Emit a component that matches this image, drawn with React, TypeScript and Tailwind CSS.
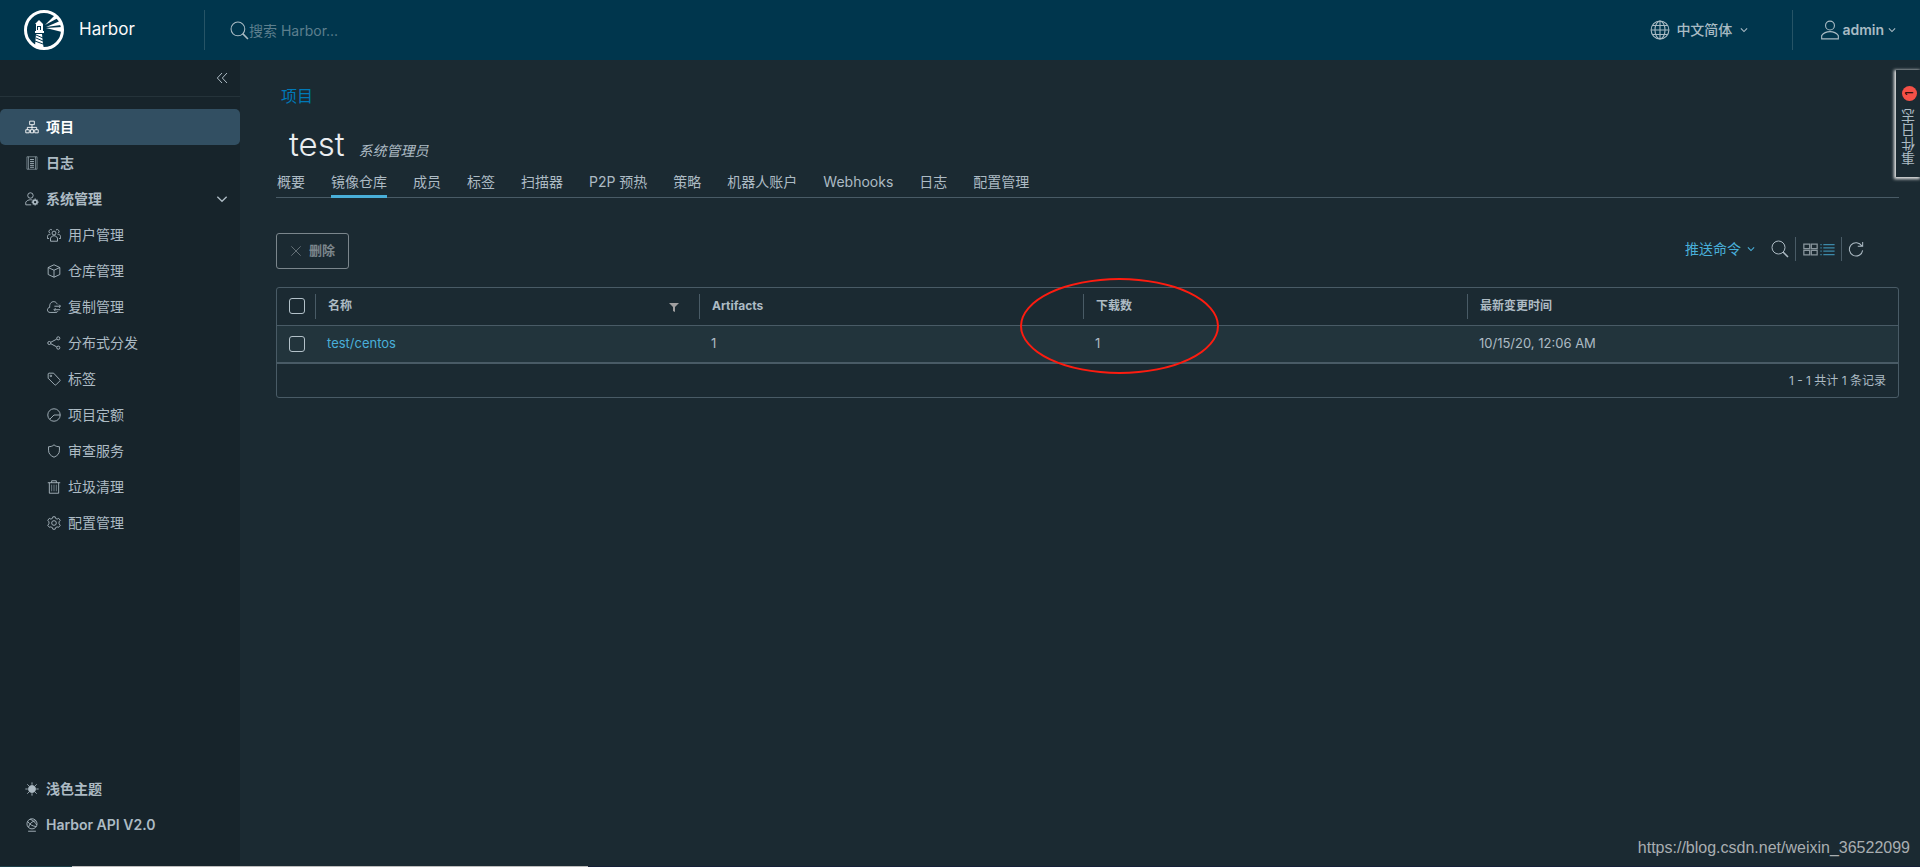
import React, { useState } from "react";

const paths: Record<string, React.ReactNode> = {
	organization: (
		<>
			<path d="M12 3h12v9H12zM2 25h9v8H2zM25 25h9v8h-9zM14 25h8v8h-8z" />
			<path d="M18 12v13M6 25v-6h24v6" />
		</>
	),
	list: (
		<>
			<path d="M5 2h26v32H5zM9 2v32M27 2v32" strokeWidth="1.5" />
			<path d="M13 9h10M13 14h10M13 19h10M13 24h10M13 29h10" />
		</>
	),
	admin: (
		<>
			<circle cx="14" cy="9" r="7" />
			<path d="M16 33H2v-7c3-4 7-6 12-6 2 0 3 0 5 1" />
			<circle cx="26" cy="26" r="5" strokeWidth="4" />
			<path
				d="M26 17v4M26 31v4M17 26h4M31 26h4M20 20l3 3M29 29l3 3M32 20l-3 3M20 32l3-3"
				strokeWidth="3"
			/>
		</>
	),
	users: (
		<>
			<circle cx="18" cy="13" r="5" />
			<path d="M9 34v-8c2-4 5-6 9-6s7 2 9 6v8z" />
			<path d="M13 5a5 5 0 1 0-6 8M23 5a5 5 0 1 1 6 8" />
			<path d="M9 16c-4 0-7 2-8 5v6h4M27 16c4 0 7 2 8 5v6h-4" />
		</>
	),
	cube: (
		<>
			<path d="M18 2l15 7v18l-15 7-15-7V9z" />
			<path d="M3 9l15 7 15-7M18 16v18" />
		</>
	),
	cloud: (
		<>
			<path d="M28 29c-1 2-3 3-5 3H8c-9 0-9-12-1-13C5 2 23 0 26 11" />
			<path d="M19 16h15M31 12l4 4-4 4M34 25H19M22 21l-4 4 4 4" />
		</>
	),
	share: (
		<>
			<circle cx="6" cy="18" r="4" />
			<circle cx="29" cy="6" r="4" />
			<circle cx="29" cy="30" r="4" />
			<path d="M10 16L25 8M10 20l15 8" />
		</>
	),
	tag: (
		<>
			<path d="M3 5v11l17 17c1 1 2 1 3 0l10-10c1-1 1-2 0-3L17 3H5c-1 0-2 1-2 2z" />
			<circle cx="10" cy="10" r="2" />
		</>
	),
	quota: (
		<>
			<circle cx="18" cy="18" r="16" />
			<path d="M34 18H18L7 29" />
		</>
	),
	shield: (
		<path d="M18 2c4 4 9 5 14 5v9c0 9-5 14-14 18C9 30 4 25 4 16V7c5 0 10-1 14-5z" />
	),
	trash: (
		<>
			<path d="M2 7h32M12 7V2h12v5M6 7v27h24V7" />
			<path d="M12 12v17M18 12v17M24 12v17" strokeWidth="1.5" />
		</>
	),
	cog: (
		<>
			<path d="M15 2h6l1 4 4 2 4-2 4 5-3 4v5l3 4-4 5-4-1-4 2-1 4h-6l-1-4-4-2-4 1-4-5 3-4v-5l-3-4 4-5 4 2 4-2z" />
			<circle cx="18" cy="18" r="6" />
		</>
	),
	sun: (
		<>
			<circle cx="18" cy="18" r="9" fill="currentColor" />
			<path d="M18 1v6M18 29v6M1 18h6M29 18h6M6 6l4 4M26 26l4 4M30 6l-4 4M6 30l4-4" />
		</>
	),
	api: (
		<>
			<circle cx="18" cy="15" r="13" />
			<path d="M7 9c5 8 12 12 22 13M28 7C18 8 12 14 9 24M13 3c8 3 14 9 17 15" />
			<path d="M8 34h20" />
		</>
	),
	search: (
		<>
			<circle cx="15" cy="15" r="13" />
			<path d="M24 24l10 10" strokeWidth="3" />
		</>
	),
	globe: (
		<>
			<circle cx="18" cy="18" r="16" />
			<path d="M18 2v32M2 18h32M5 10h26M5 26h26" />
			<ellipse cx="18" cy="18" rx="9" ry="16" />
		</>
	),
	user: (
		<>
			<circle cx="18" cy="10" r="8" />
			<path d="M3 34v-6c3-4 9-7 15-7s12 3 15 7v6z" />
		</>
	),
	chevron: <path d="M4 11l14 14 14-14" />,
	collapse: <path d="M18 3L4 18l14 15M33 3L19 18l14 15" />,
	close: <path d="M4 4l28 28M32 4L4 32" />,
	grid: <path d="M2 5h14v11H2zM20 5h14v11H20zM2 20h14v11H2zM20 20h14v11H20z" />,
	rows: (
		<path d="M8 6h27M8 14h27M8 22h27M8 30h27M1 6h3M1 14h3M1 22h3M1 30h3" />
	),
	refresh: <path d="M31 11A15 15 0 1 0 33 21M33 2v10H22" />,
};

const Icon = ({
	name,
	className = "size-3.5",
	stroke = 2.3,
}: {
	name: string;
	className?: string;
	stroke?: number;
}) => (
	<svg
		viewBox="0 0 36 36"
		fill="none"
		stroke="currentColor"
		strokeWidth={stroke}
		className={`shrink-0 ${className}`}
		aria-hidden="true"
	>
		{paths[name]}
	</svg>
);

const Logo = () => (
	<svg viewBox="0 0 40 40" className="size-10 shrink-0" aria-hidden="true">
		<circle cx="20" cy="20" r="18.5" fill="none" stroke="#fff" strokeWidth="3" />
		<path d="M11 14l4-4 4 4v7h1v2h-9v-2h1v-7z" fill="#fff" />
		<path d="M13 16h4v4h-4z" fill="#00364d" />
		<path d="M14 17h2v3h-2z" fill="#fff" />
		<path d="M12 24h6l1 10 1 5-9-3z" fill="#fff" />
		<path
			d="M12 25l7 3M12 28l7 3M11 31l8 3"
			stroke="#00364d"
			strokeWidth="1"
		/>
		<path d="M21 15L31 5l3 3zM22 17l14-6 1 4zM22 18l16-1v5z" fill="#fff" />
	</svg>
);

const systemItems = [
	{ label: "用户管理", icon: "users" },
	{ label: "仓库管理", icon: "cube" },
	{ label: "复制管理", icon: "cloud" },
	{ label: "分布式分发", icon: "share" },
	{ label: "标签", icon: "tag" },
	{ label: "项目定额", icon: "quota" },
	{ label: "审查服务", icon: "shield" },
	{ label: "垃圾清理", icon: "trash" },
	{ label: "配置管理", icon: "cog" },
];

const tabs = [
	"概要",
	"镜像仓库",
	"成员",
	"标签",
	"扫描器",
	"P2P 预热",
	"策略",
	"机器人账户",
	"Webhooks",
	"日志",
	"配置管理",
];

const repositories = [
	{
		name: "test/centos",
		artifacts: 1,
		pulls: 1,
		updated: "10/15/20, 12:06 AM",
	},
];

const Header = () => (
	<header className="h-15 shrink-0 bg-[#00364d] flex items-center text-[#a9bbc4]">
		<a href="#" className="flex items-center gap-[15px] pl-6 w-51 text-[17px] text-[#fafafa]">
			<Logo />
			Harbor
		</a>
		<label className="flex items-center flex-1 h-10 pl-[25px] border-l border-[#265466]">
			<Icon name="search" className="size-[19px]" stroke={2} />
			<input
				type="text"
				aria-label="搜索"
				placeholder="搜索 Harbor..."
				className="w-60 pt-0.5 bg-transparent outline-none text-sm placeholder:text-[#5d7f8e]"
			/>
		</label>
		<button className="flex items-center gap-1.5 pr-11 text-sm font-medium">
			<Icon name="globe" className="size-5" stroke={2} />
			中文简体
			<Icon name="chevron" className="size-2 ml-0.5" stroke={5} />
		</button>
		<button className="flex items-center h-10 pl-[27px] pr-6 border-l border-[#265466] text-sm font-semibold">
			<Icon name="user" className="size-5 mr-0.5" stroke={2} />
			admin
			<Icon name="chevron" className="size-2 ml-1" stroke={5} />
		</button>
	</header>
);

const Sidebar = () => (
	<aside className="w-60 shrink-0 flex flex-col bg-[#17242b] text-sm text-[#adbbc4]">
		<div className="h-[37px] shrink-0 border-b border-[#25333a] flex items-center justify-end pr-3">
			<button aria-label="收起">
				<Icon name="collapse" className="size-3" stroke={3} />
			</button>
		</div>
		<nav className="pt-3 flex-1">
			<a
				href="#"
				className="flex items-center gap-[7px] h-9 pl-[25px] rounded-[5px] bg-[#324f62] text-white font-bold"
			>
				<Icon name="organization" />
				项目
			</a>
			<a href="#" className="flex items-center gap-[7px] h-9 pl-[25px] font-semibold">
				<Icon name="list" />
				日志
			</a>
			<button className="flex items-center gap-[7px] h-9 w-full pl-[25px] pr-3 font-semibold">
				<Icon name="admin" />
				系统管理
				<Icon name="chevron" className="size-3 ml-auto" stroke={4} />
			</button>
			{systemItems.map((item) => (
				<a
					key={item.label}
					href="#"
					className="flex items-center gap-[7px] h-9 pl-[47px]"
				>
					<Icon name={item.icon} />
					{item.label}
				</a>
			))}
		</nav>
		<div className="pb-6 font-semibold">
			<button className="flex items-center gap-[7px] h-9 pl-[25px]">
				<Icon name="sun" />
				浅色主题
			</button>
			<a href="#" className="flex items-center gap-[7px] h-9 pl-[25px]">
				<Icon name="api" />
				Harbor API V2.0
			</a>
		</div>
	</aside>
);

const Checkbox = ({ label }: { label: string }) => (
	<input
		type="checkbox"
		aria-label={label}
		className="appearance-none block size-4 ml-3 rounded-[3px] border border-[#b3c1c9] checked:bg-[#49afd9]"
	/>
);

const HeaderCell = ({ children }: { children?: React.ReactNode }) => (
	<div className="flex items-center h-[25px] pl-3 pr-5 border-l border-[#495b66]">
		{children}
	</div>
);

const RepositoryTable = () => (
	<div className="border border-[#495b66] rounded-[3px]">
		<table className="w-full table-fixed text-left border-collapse">
			<thead className="text-xs font-semibold">
				<tr className="h-[37px] border-b border-[#495b66]">
					<th className="w-[38px]">
						<Checkbox label="全选" />
					</th>
					<th>
						<HeaderCell>
							名称
							<button aria-label="过滤" className="ml-auto">
								<svg viewBox="0 0 10 10" className="size-2.5 mt-0.5">
									<path d="M0 1h10L6 5v5L4 9V5z" fill="#a09fa0" />
								</svg>
							</button>
						</HeaderCell>
					</th>
					<th>
						<HeaderCell>Artifacts</HeaderCell>
					</th>
					<th className="relative">
						<HeaderCell>下载数</HeaderCell>
						<span className="absolute -left-[63px] -top-2.5 w-[199px] h-24 rounded-[50%] border-2 border-[#fd1c10] pointer-events-none" />
					</th>
					<th>
						<HeaderCell>最新变更时间</HeaderCell>
					</th>
					<td className="w-[47px]" />
				</tr>
			</thead>
			<tbody className="text-[13px]">
				{repositories.map((repo) => (
					<tr
						key={repo.name}
						className="h-[38px] bg-[#22343c] border-b-2 border-[#495b66]"
					>
						<td>
							<Checkbox label={repo.name} />
						</td>
						<td className="pl-3">
							<a href="#" className="text-[#49afd9]">
								{repo.name}
							</a>
						</td>
						<td className="pl-3">{repo.artifacts}</td>
						<td className="pl-3">{repo.pulls}</td>
						<td className="pl-3">{repo.updated}</td>
						<td />
					</tr>
				))}
			</tbody>
		</table>
		<div className="h-[33px] flex items-center justify-end pr-3 text-xs">
			1 - 1 共计 1 条记录
		</div>
	</div>
);

const App = () => {
	const [activeTab, setActiveTab] = useState("镜像仓库");

	return (
		<div className="relative min-h-screen flex flex-col bg-[#1b2a32] text-[#adbbc4] font-['Inter','Noto_Sans_CJK_SC',sans-serif]">
			<Header />
			<div className="flex flex-1">
				<Sidebar />
				<main className="flex-1 min-w-0 pl-9 pr-[21px] pt-6">
					<a href="#" className="block w-fit ml-[5px] leading-6 text-[#0079b8]">
						项目
					</a>
					<div className="flex items-baseline gap-3.5 mt-4 pl-[13px]">
						<h1 className="text-[33px] leading-10 font-light text-[#eaedf0]">
							test
						</h1>
						<span className="text-sm italic">系统管理员</span>
					</div>
					<div
						role="tablist"
						className="flex gap-[26px] h-8 mt-0.5 pl-px border-b border-[#495b66] text-sm"
					>
						{tabs.map((tab) => (
							<button
								key={tab}
								role="tab"
								aria-selected={tab === activeTab}
								onClick={() => setActiveTab(tab)}
								className={`h-8 pt-0.5 border-b-3 whitespace-nowrap ${
									tab === activeTab
										? "border-[#49afd9]"
										: "border-transparent"
								}`}
							>
								{tab}
							</button>
						))}
					</div>
					<div className="flex items-center justify-between mt-[35px] mb-[18px]">
						<button
							disabled
							className="flex items-center gap-[7px] h-9 px-[13px] border border-[#7b868c] rounded-[3px] text-[13px] font-semibold text-[#7b868c]"
						>
							<Icon name="close" className="size-3" />
							删除
						</button>
						<div className="flex items-center pr-[35px] pb-1">
							<button className="flex items-center gap-1.5 mr-4 text-sm text-[#49afd9]">
								推送命令
								<Icon name="chevron" className="size-2" stroke={5} />
							</button>
							<button aria-label="搜索" className="pr-1.5">
								<Icon name="search" className="size-[18px]" stroke={2} />
							</button>
							<div className="flex items-center gap-0.5 h-6 pl-[7px] pr-1.5 border-x border-[#495b66]">
								<button aria-label="卡片视图" className="text-[#8a969d]">
									<Icon name="grid" className="size-[15px]" stroke={3} />
								</button>
								<button aria-label="列表视图" className="text-[#3c89a9]">
									<Icon name="rows" className="size-[15px]" stroke={3} />
								</button>
							</div>
							<button aria-label="刷新" className="pl-1.5">
								<Icon name="refresh" className="size-4" />
							</button>
						</div>
					</div>
					<RepositoryTable />
				</main>
			</div>
			<button className="absolute right-0 top-[70px] w-6 h-[107px] flex flex-col items-center gap-2 pt-4 pl-0.5 bg-[#1b2a32] shadow-[-1px_1px_3px_1px_#e6e6e6]">
				<span className="size-[15px] shrink-0 rounded-full bg-[#f55047] text-black text-[10px] leading-[15px] -rotate-90">
					1
				</span>
				<span className="[writing-mode:vertical-rl] rotate-180 text-sm leading-5">
					事件日志
				</span>
			</button>
			<span className="absolute right-2.5 bottom-2.5 font-['Liberation_Sans',sans-serif] text-base leading-[18px] text-[#a9aeb1]">
				https://blog.csdn.net/weixin_36522099
			</span>
			<div className="absolute bottom-0 inset-x-0 h-px flex">
				<span className="w-18 bg-[#1d3f49]" />
				<span className="w-129 bg-[#bdbdbd]" />
				<span className="flex-1 bg-[#152038]" />
			</div>
		</div>
	);
};

export default App;
